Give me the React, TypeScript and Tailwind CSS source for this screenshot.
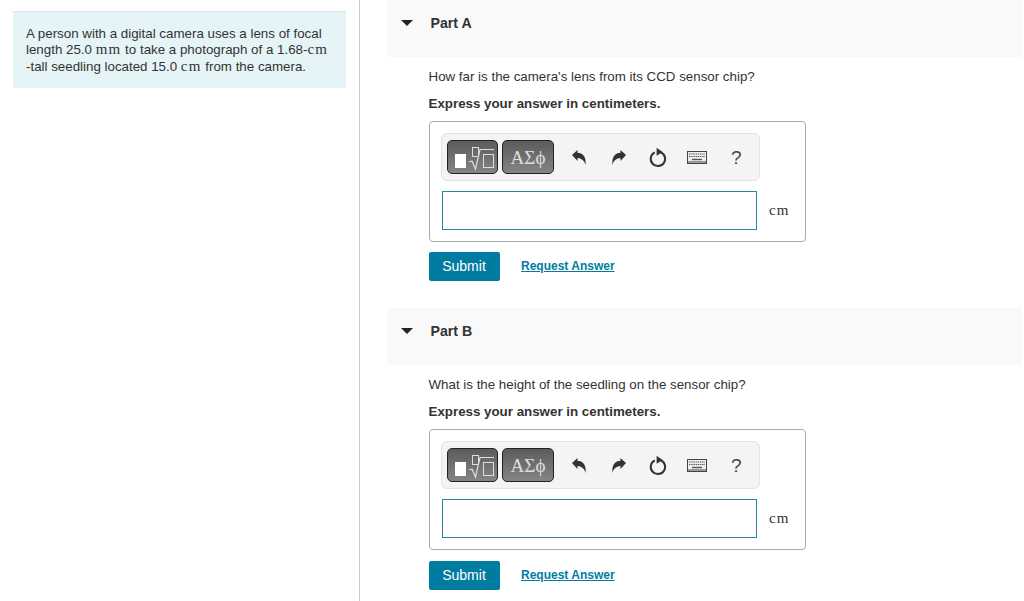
import React from 'react';

const serif = "font-['Liberation_Serif',serif]";
const unit = `${serif} text-[15px] leading-[0] tracking-[1.2px]`;

const TemplateIcon = () => (
  <svg width="49" height="32" viewBox="0 0 49 32" fill="none">
    <rect x="7" y="13" width="11" height="14" fill="#fff" />
    <rect x="24.5" y="6.5" width="6" height="9" stroke="#ddd" strokeWidth="1" />
    <path d="M21 21l3-1 3.5 8 4.5-19.5h14" stroke="#ddd" strokeWidth="1.2" />
    <rect x="35.5" y="13.5" width="10" height="13" stroke="#ddd" strokeWidth="1" />
  </svg>
);

const UndoIcon = ({ flip }: { flip?: boolean }) => (
  <svg width="14" height="15" viewBox="0 0 14 15" className={flip ? '-scale-x-100' : ''}>
    <path d="M0 5L5.5 0V2.8C10 3 14.5 6 13.5 15C12.5 11 10.5 8.5 5.5 8V11Z" fill="#333" />
  </svg>
);

const ResetIcon = () => (
  <svg width="18" height="21" viewBox="0 0 18 21" fill="none">
    <path d="M5.8 5.4A7.2 7.2 0 1 0 11.6 5.2" stroke="#333" strokeWidth="2" />
    <path d="M7.6 0.8L13.6 5L7.6 8.8Z" fill="#333" />
  </svg>
);

const KeyboardIcon = () => (
  <svg width="20" height="13" viewBox="0 0 20 13" fill="none">
    <rect x="0.5" y="0.5" width="19" height="12" fill="#eee" stroke="#444" />
    <path d="M2 3h16M2 5.5h16" stroke="#555" strokeWidth="1.2" strokeDasharray="1.4 0.8" />
    <path d="M5 8.5h10" stroke="#555" strokeWidth="1.4" />
    <path d="M1 11h18" stroke="#444" />
  </svg>
);

const Part = ({ name, question }: { name: string; question: string }) => (
  <section>
    <div className="h-[57px] bg-[#f9f9f9] flex items-start pt-[15px]">
      <div className="w-[43.5px] pl-[14px] pt-[5px]">
        <div className="w-0 h-0 border-x-[6px] border-x-transparent border-t-[6px] border-t-[#222]" />
      </div>
      <h2 className="text-[14.2px] leading-[16px] font-bold text-[#333]">{name}</h2>
    </div>
    <div className="pl-[41.5px]">
      <p className="mt-[11.5px] text-[13.33px] leading-[16px] text-[#333]">{question}</p>
      <p className="mt-[11.5px] text-[13.33px] leading-[16px] font-bold text-[#333]">Express your answer in centimeters.</p>
      <div className="mt-[9px] w-[377.5px] h-[121px] border border-[#aaa] rounded-[4px] pt-[11px] pl-[11.5px]">
        <div className="w-[319px] h-[48px] bg-[#f4f4f4] border border-[#e2e2e2] rounded-[6px] flex items-center pl-[5px]">
          <button className="w-[51px] h-[34px] rounded-[5px] border border-[#222] bg-gradient-to-b from-[#5c5c5c] to-[#858585] flex items-center justify-center">
            <TemplateIcon />
          </button>
          <button className={`ml-[4px] w-[52px] h-[34px] rounded-[5px] border border-[#222] bg-gradient-to-b from-[#5c5c5c] to-[#858585] text-[#dedede] text-[19px] leading-none ${serif}`}>
            ΑΣϕ
          </button>
          <div className="ml-[18px]"><UndoIcon /></div>
          <div className="ml-[26px]"><UndoIcon flip /></div>
          <div className="ml-[23px]"><ResetIcon /></div>
          <div className="ml-[20px]"><KeyboardIcon /></div>
          <span className="ml-[24px] text-[19px] leading-none text-[#444]">?</span>
        </div>
        <div className="mt-[10px] flex items-center">
          <input className="ml-[1px] w-[315px] h-[39px] border border-[#2a86a5] bg-white outline-none" />
          <span className={`ml-[12px] text-[15px] leading-none tracking-[1px] text-[#333] ${serif}`}>cm</span>
        </div>
      </div>
      <div className="mt-[10.2px] flex items-center">
        <button className="w-[71px] h-[29px] bg-[#007ca0] rounded-[2px] text-white text-[14px]">Submit</button>
        <a href="#" className="ml-[21.5px] pb-[1px] text-[12px] font-bold underline text-[#007ca0]">Request Answer</a>
      </div>
    </div>
  </section>
);

export default function App() {
  return (
    <div className="flex h-[601px] overflow-hidden bg-white font-['Liberation_Sans',Arial,sans-serif]">
      <aside className="w-[360px] shrink-0 border-r border-[#ccc] pl-[13px] pt-[11px]">
        <div className="w-[333px] h-[77px] bg-[#e5f4f6] border-t border-[#dde5e8] pl-[13px] pt-[14px] text-[13.33px] leading-[16.4px] text-[#333]">
          A person with a digital camera uses a lens of focal
          <br />
          length 25.0 <span className={unit}>mm</span> to take a photograph of a 1.68-<span className={unit}>cm</span>
          <br />
          -tall seedling located 15.0 <span className={unit}>cm</span> from the camera.
        </div>
      </aside>
      <main className="ml-[27px] w-[635px] flex flex-col gap-[27.2px]">
        <Part name="Part A" question="How far is the camera's lens from its CCD sensor chip?" />
        <Part name="Part B" question="What is the height of the seedling on the sensor chip?" />
      </main>
    </div>
  );
}
